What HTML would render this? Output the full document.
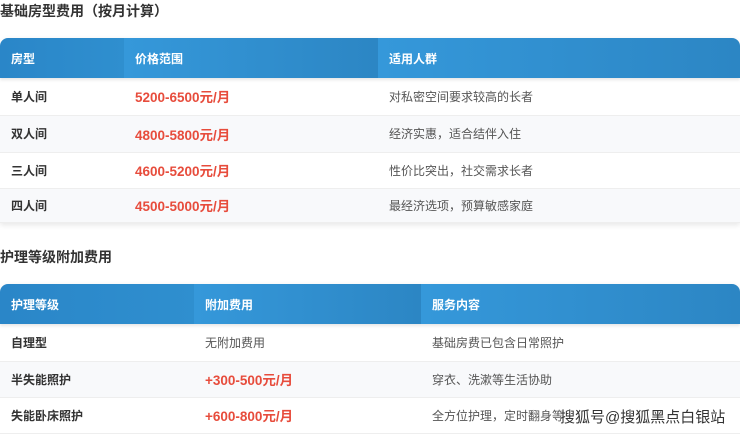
<!DOCTYPE html>
<html><head><meta charset="utf-8"><style>
body{margin:0;width:740px;height:432px;overflow:hidden;background:#fff;font-family:"Liberation Sans","Noto Sans CJK SC",sans-serif;position:relative}
h2{position:absolute;left:0;margin:0;font-size:14px;font-weight:bold;color:#333}
table{position:absolute;left:0;width:740px;border-collapse:collapse;font-size:12px;color:#555}
th{color:#fff;text-align:left;font-weight:bold;height:40px;padding:0 0 0 11px;background:linear-gradient(90deg,#3598da,#2c86c4)}
th:first-child{background:linear-gradient(90deg,#2a86c8,#2f8fcf)}
thead tr{box-shadow:0 2px 3px rgba(0,0,0,.1)}
td{padding:0 0 0 11px;border-bottom:1px solid #eee}
td:first-child{font-weight:bold;color:#333}
tr:nth-child(even) td{background:#f8f9fb}
.p{color:#e74c3c;font-weight:bold;font-size:13.5px}
.wrap{position:absolute;left:0;width:740px;border-radius:8px 8px 0 0;overflow:hidden;box-shadow:0 2px 6px rgba(0,0,0,.1)}
.wrap table{position:static}
.wm{position:absolute;left:560px;top:406px;font-size:15px;font-weight:normal;color:#333;text-shadow:0 0 2px #fff,0 0 2px #fff,0 0 1px #fff}
</style></head><body>
<h2 style="top:1px">基础房型费用（按月计算）</h2>
<div class="wrap" style="top:38px"><table>
<thead><tr><th style="width:113px">房型</th><th style="width:243px">价格范围</th><th>适用人群</th></tr></thead>
<tbody>
<tr style="height:37px"><td>单人间</td><td class="p">5200-6500元/月</td><td>对私密空间要求较高的长者</td></tr>
<tr style="height:37px"><td>双人间</td><td class="p">4800-5800元/月</td><td>经济实惠，适合结伴入住</td></tr>
<tr style="height:36px"><td>三人间</td><td class="p">4600-5200元/月</td><td>性价比突出，社交需求长者</td></tr>
<tr style="height:34px"><td>四人间</td><td class="p">4500-5000元/月</td><td>最经济选项，预算敏感家庭</td></tr>
</tbody></table></div>
<h2 style="top:247px">护理等级附加费用</h2>
<div class="wrap" style="top:284px"><table>
<thead><tr><th style="width:183px">护理等级</th><th style="width:216px">附加费用</th><th>服务内容</th></tr></thead>
<tbody>
<tr style="height:37px"><td>自理型</td><td>无附加费用</td><td>基础房费已包含日常照护</td></tr>
<tr style="height:36px"><td>半失能照护</td><td class="p">+300-500元/月</td><td>穿衣、洗漱等生活协助</td></tr>
<tr style="height:36px"><td>失能卧床照护</td><td class="p">+600-800元/月</td><td>全方位护理，定时翻身等</td></tr>
</tbody></table></div>
<div class="wm">搜狐号@搜狐黑点白银站</div>
</body></html>
